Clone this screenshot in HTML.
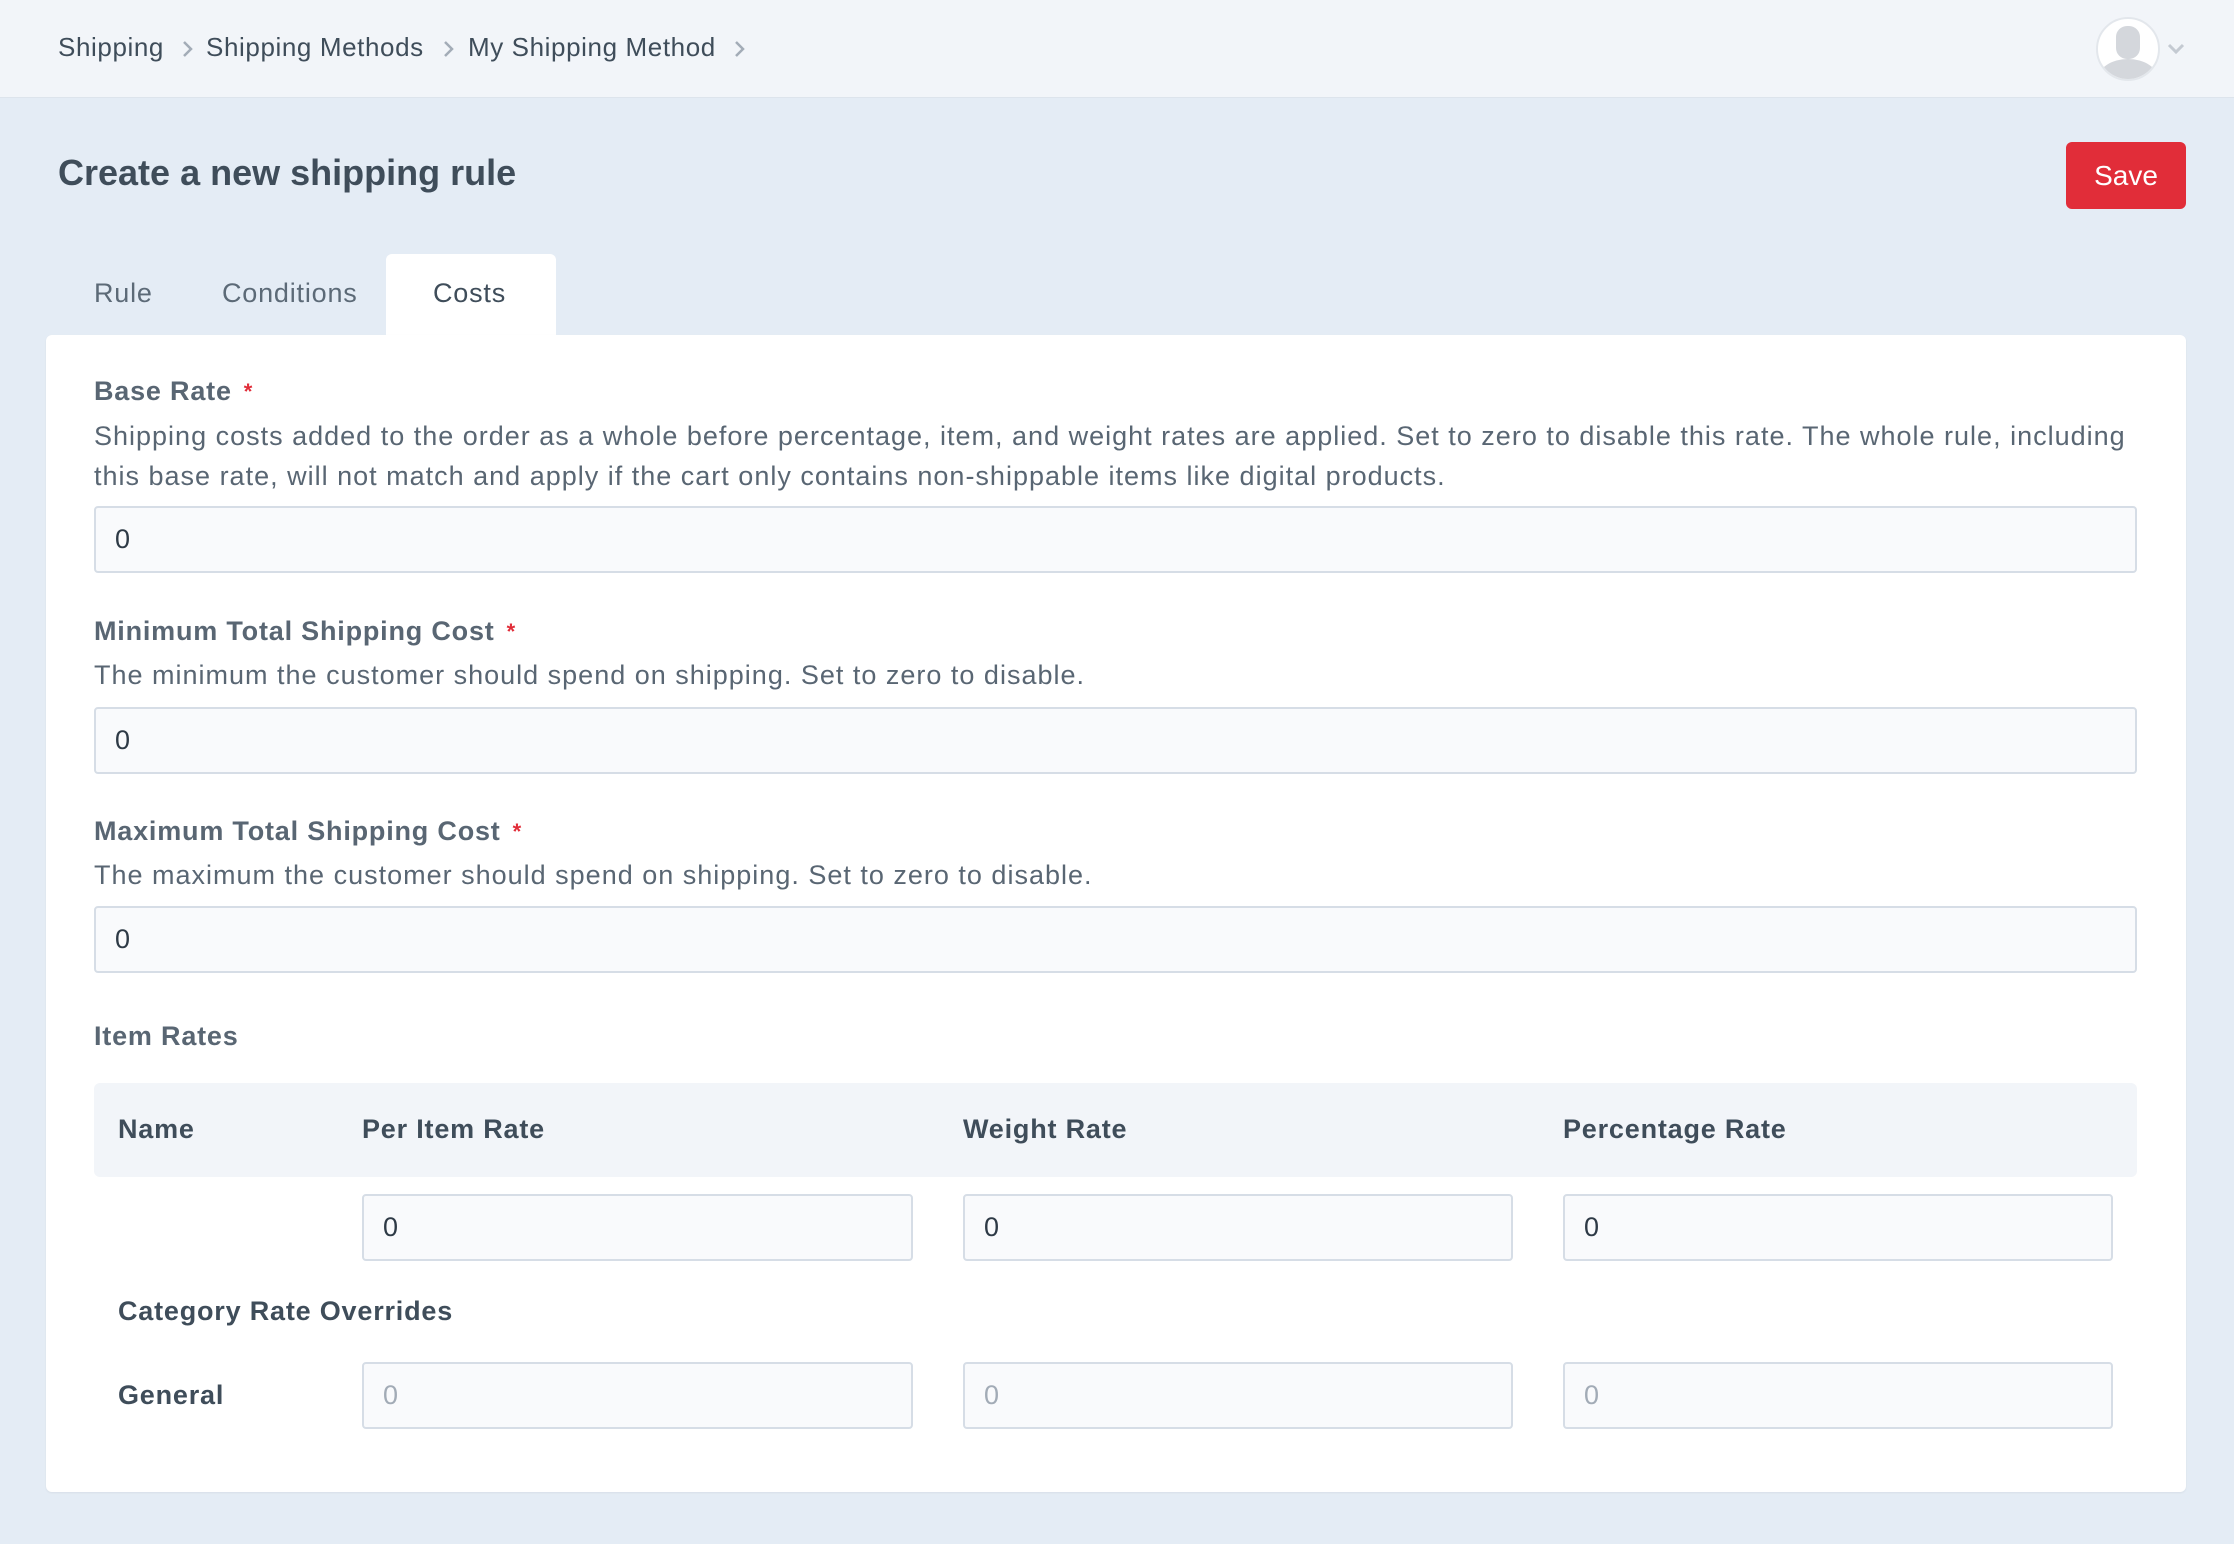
<!DOCTYPE html>
<html><head><meta charset="utf-8"><style>
*{box-sizing:border-box;margin:0;padding:0}
body{width:2234px;height:1544px;background:#e4ecf5;font-family:"Liberation Sans",sans-serif;color:#596673;position:relative;overflow:hidden}
.a{position:absolute;white-space:nowrap}
.hdr{position:absolute;left:0;top:0;width:2234px;height:98px;background:#f2f5f9;border-bottom:1px solid #dde4ec}
.bc{font-size:26px;color:#3f4d5a;top:32px;letter-spacing:.6px}
.chev{top:40px}
.title{left:58px;top:152px;font-size:36px;font-weight:bold;color:#3f4d5a}
.save{left:2066px;top:142px;width:120px;height:67px;background:#e12d39;border-radius:6px;color:#fff;font-size:28px;text-align:center;line-height:67px}
.tab{font-size:27px;color:#5c6a77;top:278px;letter-spacing:.8px}
.costs{left:386px;top:254px;width:170px;height:84px;background:#fff;border-radius:6px 6px 0 0}
.panel{left:46px;top:335px;width:2140px;height:1157px;background:#fff;border-radius:6px;box-shadow:0 1px 2px rgba(0,0,0,.06)}
.lbl{font-size:27px;font-weight:bold;color:#596673;letter-spacing:.8px}
.lbl i{color:#e12d39;font-style:normal;font-size:22px;margin-left:12px;position:relative;top:-1px}
.desc{font-size:27px;line-height:40px;color:#596673;letter-spacing:1px}
.inp{position:absolute;background:#f9fafc;border:2px solid #d6dde6;border-radius:4px;font-size:27px;color:#2e3a46;padding-left:19px;line-height:63px}
.ph{color:#a2abb6}
.th{font-size:27px;font-weight:bold;color:#3f4d5a;top:1114px;letter-spacing:.8px}
</style></head><body>
<div class="hdr"></div>
<div class="a bc" style="left:58px">Shipping</div>
<svg class="a chev" style="left:181px" width="12" height="18" viewBox="0 0 12 18"><path d="M3 2l7 7-7 7" fill="none" stroke="#a3acb7" stroke-width="2.5"/></svg>
<div class="a bc" style="left:206px">Shipping Methods</div>
<svg class="a chev" style="left:442px" width="12" height="18" viewBox="0 0 12 18"><path d="M3 2l7 7-7 7" fill="none" stroke="#a3acb7" stroke-width="2.5"/></svg>
<div class="a bc" style="left:468px">My Shipping Method</div>
<svg class="a chev" style="left:733px" width="12" height="18" viewBox="0 0 12 18"><path d="M3 2l7 7-7 7" fill="none" stroke="#a3acb7" stroke-width="2.5"/></svg>
<svg class="a" style="left:2096px;top:17px" width="64" height="64" viewBox="0 0 64 64">
<defs><clipPath id="c"><circle cx="32" cy="32" r="30"/></clipPath></defs>
<circle cx="32" cy="32" r="31" fill="#fff" stroke="#e3e7ec" stroke-width="2"/>
<g clip-path="url(#c)" fill="#d4d7dc"><rect x="20" y="9" width="24" height="33" rx="11"/><ellipse cx="32" cy="62" rx="30" ry="20"/></g></svg>
<svg class="a" style="left:2166px;top:42px" width="20" height="14" viewBox="0 0 20 14"><path d="M3 3l7 7 7-7" fill="none" stroke="#c4cad2" stroke-width="3"/></svg>

<div class="a title">Create a new shipping rule</div>
<div class="a save">Save</div>

<div class="a costs"></div>
<div class="a tab" style="left:94px">Rule</div>
<div class="a tab" style="left:222px">Conditions</div>
<div class="a tab" style="left:433px;color:#3f4d5a">Costs</div>

<div class="a panel"></div>
<div class="a lbl" style="left:94px;top:376px">Base Rate<i>*</i></div>
<div class="a desc" style="left:94px;top:416px">Shipping costs added to the order as a whole before percentage, item, and weight rates are applied. Set to zero to disable this rate. The whole rule, including<br>this base rate, will not match and apply if the cart only contains non-shippable items like digital products.</div>
<div class="inp" style="left:94px;top:506px;width:2043px;height:67px">0</div>

<div class="a lbl" style="left:94px;top:616px">Minimum Total Shipping Cost<i>*</i></div>
<div class="a desc" style="left:94px;top:655px">The minimum the customer should spend on shipping. Set to zero to disable.</div>
<div class="inp" style="left:94px;top:707px;width:2043px;height:67px">0</div>

<div class="a lbl" style="left:94px;top:816px">Maximum Total Shipping Cost<i>*</i></div>
<div class="a desc" style="left:94px;top:855px">The maximum the customer should spend on shipping. Set to zero to disable.</div>
<div class="inp" style="left:94px;top:906px;width:2043px;height:67px">0</div>

<div class="a lbl" style="left:94px;top:1021px">Item Rates</div>
<div class="a" style="left:94px;top:1083px;width:2043px;height:94px;background:#f2f5f9;border-radius:6px"></div>
<div class="a th" style="left:118px">Name</div>
<div class="a th" style="left:362px">Per Item Rate</div>
<div class="a th" style="left:963px">Weight Rate</div>
<div class="a th" style="left:1563px">Percentage Rate</div>

<div class="inp" style="left:362px;top:1194px;width:551px;height:67px">0</div>
<div class="inp" style="left:963px;top:1194px;width:550px;height:67px">0</div>
<div class="inp" style="left:1563px;top:1194px;width:550px;height:67px">0</div>

<div class="a lbl" style="left:118px;top:1296px;color:#3f4d5a">Category Rate Overrides</div>
<div class="a lbl" style="left:118px;top:1380px;color:#3f4d5a">General</div>
<div class="inp ph" style="left:362px;top:1362px;width:551px;height:67px">0</div>
<div class="inp ph" style="left:963px;top:1362px;width:550px;height:67px">0</div>
<div class="inp ph" style="left:1563px;top:1362px;width:550px;height:67px">0</div>
</body></html>
